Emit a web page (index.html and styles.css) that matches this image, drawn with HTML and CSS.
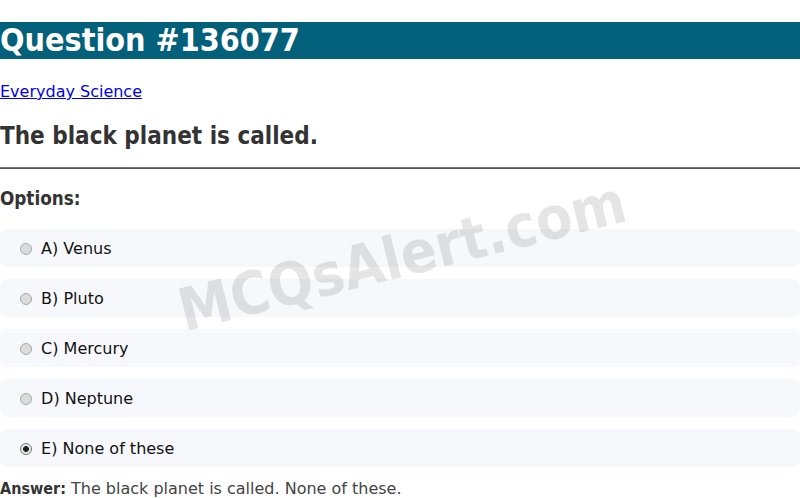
FILE: index.html
```html
<!DOCTYPE html>
<html lang="en">
<head>
<meta charset="utf-8">
<title>Question #136077</title>
<link rel="stylesheet" href="styles.css">
</head>
<body>
<h1 class="title">Question #136077</h1>
<p class="cat"><a href="#">Everyday Science</a></p>
<h2 class="question">The black planet is called.</h2>
<hr class="rule">
<h3 class="opts-head">Options:</h3>
<div class="options">
  <label class="option"><input type="radio" name="q" class="radio"> A) Venus</label>
  <label class="option"><input type="radio" name="q" class="radio"> B) Pluto</label>
  <label class="option"><input type="radio" name="q" class="radio"> C) Mercury</label>
  <label class="option"><input type="radio" name="q" class="radio"> D) Neptune</label>
  <label class="option"><input type="radio" name="q" class="radio" checked> E) None of these</label>
</div>
<p class="answer"><strong class="answer-label">Answer:</strong> The black planet is called. None of these.</p>
<div class="watermark">MCQsAlert.com</div>
</body>
</html>
```
FILE: styles.css
```css
html, body {
  margin: 0;
  padding: 0;
  background: #fff;
}
body {
  font-family: "DejaVu Sans", sans-serif;
  color: #333;
  position: relative;
  overflow: hidden;
  height: 498px;
}
.title, .question, .opts-head, .answer-label, .watermark {
  font-family: "DejaVu Sans Condensed", "DejaVu Sans", sans-serif;
  font-weight: bold;
}
.title {
  margin: 22px 0 23px;
  font-size: 32px;
  background: #03607a;
  color: #fff;
  line-height: 37px;
}
.cat {
  margin: 23px 0 16px;
  font-size: 16px;
}
.cat a {
  color: #0000ee;
}
.question {
  font-size: 24px;
  color: #333;
  margin: 20.9px 0 16.9px;
}
.rule {
  margin: 0;
  border: 0;
  border-top: 1px solid #777;
  border-bottom: 1px solid #555;
  height: 0;
}
.opts-head {
  font-size: 18.72px;
  margin: 19px 0 19.8px;
  color: #333;
}
.options {
  display: flex;
  flex-direction: column;
  gap: 12px;
}
.option {
  display: flex;
  align-items: center;
  background: #f7f8fc;
  border-radius: 8px;
  padding: 11px 15px 9px;
  height: 18px;
  font-size: 16px;
  color: #111;
  white-space: pre;
}
.radio {
  appearance: none;
  -webkit-appearance: none;
  width: 12px;
  height: 12px;
  margin: 0 4px 0 5px;
  border-radius: 50%;
  border: 1px solid #a8a8a8;
  background: #dcdcdc;
  box-sizing: border-box;
  flex: none;
}
.radio:checked {
  background: radial-gradient(circle, #222 0 2.6px, #e8e8e8 3.2px);
  border-color: #777;
}
.answer {
  margin: 12px 0 0;
  font-size: 16px;
  color: #444;
}
.answer-label {
  color: #333;
}
.watermark {
  position: absolute;
  left: 402px;
  top: 256px;
  transform: translate(-50%, -50%) rotate(-14deg);
  font-size: 59px;
  color: rgba(0, 0, 0, 0.1);
  white-space: nowrap;
  pointer-events: none;
}
```
